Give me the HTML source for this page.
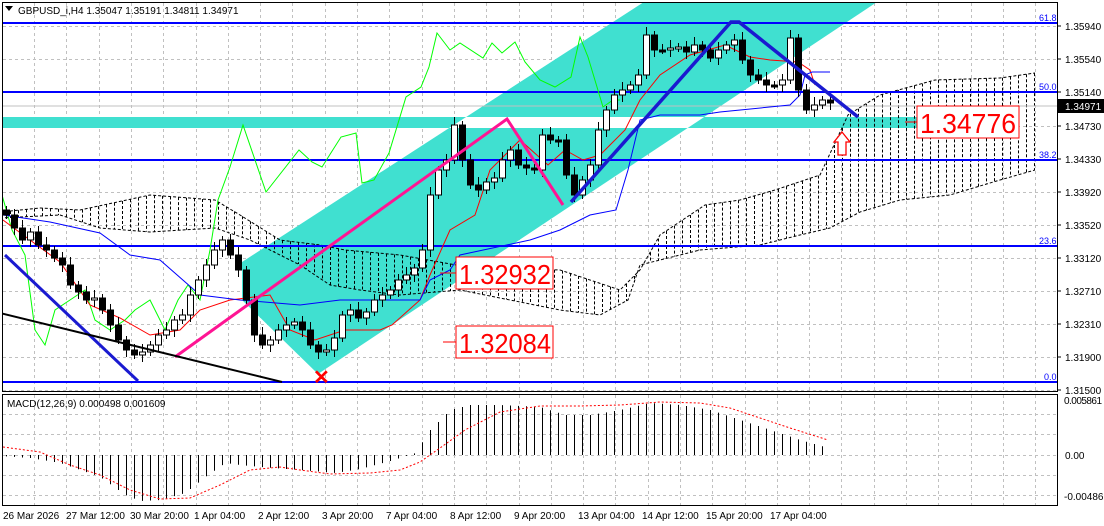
<!DOCTYPE html>
<html><head><meta charset="utf-8"><style>
html,body{margin:0;padding:0;background:#fff;}
body{width:1104px;height:526px;overflow:hidden;position:relative;font-family:"Liberation Sans",sans-serif;}
svg{position:absolute;left:0;top:0;}
.ax{font-size:10px;fill:#000;font-family:"Liberation Sans",sans-serif;}
.big{font-size:28px;fill:#f00;font-family:"Liberation Sans",sans-serif;}
.fib{font-size:9px;fill:#0000ff;font-family:"Liberation Sans",sans-serif;}
</style></head><body>
<svg id="s" width="1104" height="526" xmlns="http://www.w3.org/2000/svg">
<defs><clipPath id="main"><rect x="3" y="3" width="1054" height="388"/></clipPath>
<clipPath id="chan"><polygon points="242,262 647,0 880,0 318,374 242,300"/></clipPath></defs>
<g id="grid" stroke="#c0c0c0" stroke-dasharray="3,3" stroke-width="1"></g>
<g clip-path="url(#main)">
<rect x="0" y="117" width="940" height="11" fill="#40e0d0"/>
<polygon points="242,262 647,0 880,0 318,374 242,300" fill="#40e0d0"/>
<rect x="0" y="117" width="940" height="11" fill="#fff" clip-path="url(#chan)"/>
<g id="cloud" stroke="#000" stroke-dasharray="3,2" stroke-width="1" fill="none"></g>
<line x1="3" y1="106" x2="1057" y2="106" stroke="#c0c0c0"/>
<g stroke="#0000ff" stroke-width="2">
<line x1="3" y1="23" x2="1057" y2="23"/><line x1="3" y1="92" x2="1057" y2="92"/>
<line x1="3" y1="160" x2="1057" y2="160"/><line x1="3" y1="246" x2="1057" y2="246"/>
<line x1="3" y1="382" x2="1057" y2="382"/></g>
<polyline id="green" fill="none" stroke="#00ff00" stroke-width="1"/>
<polyline id="red" fill="none" stroke="#ff0000" stroke-width="1"/>
<polyline id="blue" fill="none" stroke="#0000ff" stroke-width="1"/>
<g id="candles"></g>
<polyline points="175,357 507,119 563,205" fill="none" stroke="#ff1493" stroke-width="3"/>
<polyline points="571,202 731,22 739,22 858,117" fill="none" stroke="#1a1ad0" stroke-width="3.5"/>
<line x1="5" y1="255" x2="138" y2="381" stroke="#1a1ad0" stroke-width="3"/>
<line x1="0" y1="313" x2="282" y2="382" stroke="#000" stroke-width="2"/>
<text x="313" y="384" fill="#f00" font-size="20" font-weight="bold" font-family="Liberation Sans">✕</text>
<polygon points="842,132 850,142 846,142 846,155 838,155 838,142 834,142" fill="#fff" stroke="#f00" stroke-width="1.3"/>
<line x1="440" y1="273" x2="456" y2="273" stroke="#f00"/>
<rect x="456" y="257" width="97" height="32" fill="#fff" stroke="#f00"/>
<text x="459" y="284" class="big" textLength="92" lengthAdjust="spacingAndGlyphs">1.32932</text>
<line x1="443" y1="342" x2="456" y2="342" stroke="#f00"/>
<rect x="456" y="326" width="97" height="32" fill="#fff" stroke="#f00"/>
<text x="459" y="353" class="big" textLength="92" lengthAdjust="spacingAndGlyphs">1.32084</text>
<line x1="905" y1="122" x2="917" y2="122" stroke="#f00"/>
<rect x="917" y="106" width="102" height="32" fill="#fff" stroke="#f00"/>
<text x="920" y="133" class="big" textLength="96" lengthAdjust="spacingAndGlyphs">1.34776</text>
<text x="1039" y="21" class="fib">61.8</text><text x="1039" y="90" class="fib">50.0</text>
<text x="1039" y="158" class="fib">38.2</text><text x="1039" y="244" class="fib">23.6</text>
<text x="1044" y="380" class="fib">0.0</text>
</g>
<polygon points="5,6 13,6 9,11" fill="#000"/>
<text x="18" y="14" class="ax">GBPUSD_i,H4  1.35047 1.35191 1.34811 1.34971</text>
<rect x="2.5" y="2.5" width="1055" height="389" fill="none" stroke="#000"/>
<rect x="2.5" y="394.5" width="1055" height="111" fill="none" stroke="#000"/>
<g id="macd"></g>
<text x="7" y="407" class="ax">MACD(12,26,9) 0.000498 0.001609</text>
<g class="ax">
<text x="1065" y="30">1.35940</text><text x="1065" y="63">1.35540</text><text x="1065" y="96">1.35140</text>
<text x="1065" y="130">1.34730</text><text x="1065" y="163">1.34330</text><text x="1065" y="196">1.33920</text>
<text x="1065" y="229">1.33520</text><text x="1065" y="262">1.33120</text><text x="1065" y="295">1.32710</text>
<text x="1065" y="328">1.32310</text><text x="1065" y="361">1.31900</text><text x="1065" y="394">1.31500</text>
<text x="1064" y="404" textLength="38">0.005861</text><text x="1065" y="459">0.00</text><text x="1064" y="500">-0.00486</text>
</g>
<rect x="1058" y="99" width="46" height="14" fill="#000"/>
<text x="1065" y="110" class="ax" style="fill:#fff">1.34971</text>
<g stroke="#000"><line x1="1057" y1="26" x2="1061" y2="26"/><line x1="1057" y1="59" x2="1061" y2="59"/><line x1="1057" y1="92" x2="1061" y2="92"/><line x1="1057" y1="126" x2="1061" y2="126"/><line x1="1057" y1="159" x2="1061" y2="159"/><line x1="1057" y1="192" x2="1061" y2="192"/><line x1="1057" y1="225" x2="1061" y2="225"/><line x1="1057" y1="258" x2="1061" y2="258"/><line x1="1057" y1="291" x2="1061" y2="291"/><line x1="1057" y1="324" x2="1061" y2="324"/><line x1="1057" y1="357" x2="1061" y2="357"/><line x1="1057" y1="390" x2="1061" y2="390"/></g>
<g class="ax">
<text x="3" y="519">26 Mar 2026</text><text x="66" y="519">27 Mar 12:00</text><text x="130" y="519">30 Mar 20:00</text>
<text x="194" y="519">1 Apr 04:00</text><text x="258" y="519">2 Apr 12:00</text><text x="322" y="519">3 Apr 20:00</text>
<text x="386" y="519">7 Apr 04:00</text><text x="450" y="519">8 Apr 12:00</text><text x="514" y="519">9 Apr 20:00</text>
<text x="578" y="519">13 Apr 04:00</text><text x="642" y="519">14 Apr 12:00</text><text x="706" y="519">15 Apr 20:00</text>
<text x="770" y="519">17 Apr 04:00</text>
</g>
</svg>
<script>
var NS="http://www.w3.org/2000/svg";
function el(p,t,a){var e=document.createElementNS(NS,t);for(var k in a)e.setAttribute(k,a[k]);p.appendChild(e);return e;}
function interp(pts,x){for(var i=0;i<pts.length-1;i++){if(x>=pts[i][0]&&x<=pts[i+1][0]){var t=(x-pts[i][0])/(pts[i+1][0]-pts[i][0]);return pts[i][1]+t*(pts[i+1][1]-pts[i][1]);}}return null;}
var g=document.getElementById('grid');
for(var x=34;x<1056;x+=32.3){el(g,'line',{x1:Math.round(x)+.5,y1:3,x2:Math.round(x)+.5,y2:391});el(g,'line',{x1:Math.round(x)+.5,y1:395,x2:Math.round(x)+.5,y2:505});}
[26,59,92,126,159,192,225,258,291,324,357,390].forEach(function(y){el(g,'line',{x1:3,y1:y+.5,x2:1057,y2:y+.5});});
[414,434,475,495].forEach(function(y){el(g,'line',{x1:3,y1:y+.5,x2:1057,y2:y+.5});});
var top_=[[0,212],[40,208],[80,210],[150,195],[215,200],[240,215],[280,240],[320,245],[345,250],[400,255],[456,265],[500,268],[560,270],[620,290],[640,270],[660,235],[705,205],[740,200],[775,190],[820,175],[848,115],[880,95],[935,80],[1000,78],[1035,73]];
var bot=[[0,218],[60,215],[100,228],[150,232],[215,228],[250,240],[300,265],[330,285],[360,290],[400,295],[460,290],[500,298],[560,310],[600,315],[628,300],[640,265],[700,250],[760,245],[800,235],[830,228],[860,212],[900,200],[950,195],[1000,180],[1035,170]];
var c=document.getElementById('cloud');
for(var x=2;x<=1035;x+=8){var a=interp(top_,x),b=interp(bot,x);if(a!=null&&b!=null&&b-a>3)el(c,'line',{x1:x+.5,y1:a,x2:x+.5,y2:b});}
el(c,'polyline',{points:top_.map(function(p){return p.join(',')}).join(' ')});
el(c,'polyline',{points:bot.map(function(p){return p.join(',')}).join(' ')});
var green=[[2,195],[12,230],[25,255],[35,330],[45,345],[55,310],[70,300],[85,290],[95,320],[110,330],[125,320],[135,310],[150,300],[165,330],[178,300],[188,285],[200,300],[210,250],[218,200],[230,167],[243,125],[266,192],[299,150],[312,162],[322,167],[341,137],[356,133],[362,183],[374,180],[389,153],[406,97],[421,87],[429,67],[437,33],[450,50],[460,43],[483,58],[492,43],[502,53],[515,42],[525,62],[540,80],[555,87],[571,77],[580,37],[588,57],[603,107],[613,100],[620,100]];
document.getElementById('green').setAttribute('points',green.map(function(p){return p.join(',')}).join(' '));
var red=[[3,220],[30,240],[60,262],[90,305],[120,318],[150,335],[180,330],[200,310],[230,300],[270,295],[290,330],[315,340],[345,330],[380,330],[392,325],[420,300],[430,275],[450,230],[475,215],[490,170],[520,140],[548,165],[565,150],[583,160],[600,155],[625,130],[640,100],[660,75],[690,55],[725,45],[750,57],[770,60],[798,62],[810,70],[815,85]];
document.getElementById('red').setAttribute('points',red.map(function(p){return p.join(',')}).join(' '));
var blue=[[3,215],[50,222],[100,233],[130,255],[160,260],[200,295],[240,300],[300,305],[340,300],[420,300],[430,280],[450,270],[460,255],[530,240],[560,230],[590,215],[616,210],[628,170],[640,120],[660,115],[700,115],[720,112],[790,105],[800,95],[805,75],[812,72],[830,72]];
document.getElementById('blue').setAttribute('points',blue.map(function(p){return p.join(',')}).join(' '));
var cl=[215,228,240,232,245,250,258,265,285,292,300,298,310,325,340,350,355,352,345,335,330,320,315,295,280,265,250,240,255,270,300,335,345,340,330,325,322,330,345,352,350,338,315,310,318,312,300,295,290,280,275,268,250,195,170,160,125,160,185,190,182,178,160,150,165,168,170,135,140,140,175,195,180,165,130,110,95,90,85,75,35,50,50,48,47,52,45,50,58,50,45,40,60,75,80,85,85,80,38,90,110,105,100,103];
var cg=document.getElementById('candles');var prev=210;
for(var i=0;i<cl.length;i++){var x=6+8*i;if(x>830)break;var o=prev,cc=cl[i];var hi=Math.min(o,cc)-4-(i%3)*2,lo=Math.max(o,cc)+4+(i%2)*3;
el(cg,'line',{x1:x+.5,y1:hi,x2:x+.5,y2:lo,stroke:'#000'});
var t=Math.min(o,cc),h=Math.max(2,Math.abs(o-cc));
el(cg,'rect',{x:x-2.5,y:t,width:6,height:h,fill:cc<o?'#fff':'#000',stroke:'#000'});prev=cc;}
var m=document.getElementById('macd');
el(m,'line',{x1:3,y1:455.5,x2:1057,y2:455.5,stroke:'#c0c0c0','stroke-dasharray':'3,3'});
var hist=[[0,-1],[30,-3],[60,-8],[100,-22],[125,-40],[140,-46],[160,-45],[185,-38],[205,-22],[225,-8],[240,-10],[260,-12],[300,-15],[335,-18],[360,-14],[390,-6],[415,2],[430,25],[450,45],[470,50],[500,50],[540,48],[565,40],[590,40],[620,45],[650,52],[680,50],[710,45],[740,35],[770,25],[800,15],[828,7]];
for(var x=6;x<=830;x+=8){var v=interp(hist,x);if(v==null)continue;el(m,'line',{x1:x+.5,y1:455,x2:x+.5,y2:455-v,stroke:'#000'});}
var sig=[[3,447],[40,452],[70,465],[100,475],[130,490],[160,499],[190,498],[220,485],[250,470],[280,467],[300,470],[330,474],[370,473],[400,470],[420,462],[440,448],[465,430],[500,412],[540,406],[580,406],[620,405],[660,402],[700,403],[730,408],[760,418],[790,428],[828,440]];
el(m,'polyline',{points:sig.map(function(p){return p.join(',')}).join(' '),fill:'none',stroke:'#f00','stroke-dasharray':'2,2'});
</script>
</body></html>
